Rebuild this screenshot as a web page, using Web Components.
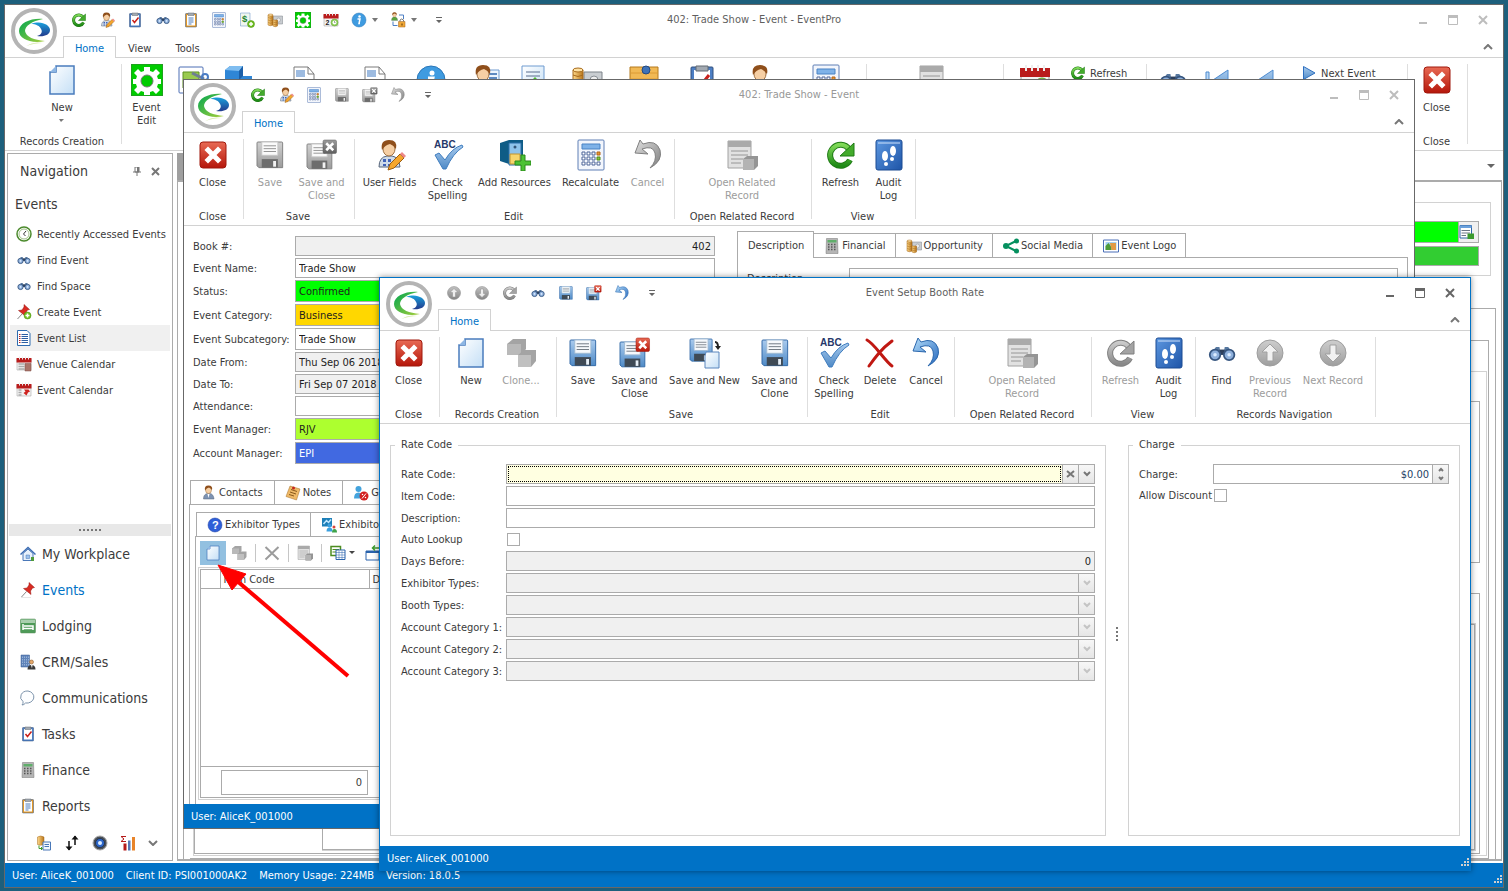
<!DOCTYPE html>
<html lang="en">
<head>
<meta charset="utf-8">
<title>402: Trade Show - Event - EventPro</title>
<style>
  html, body { height: 100%; margin: 0; }
  body {
    display: flex;
    padding: 4px 4px 3px;
    box-sizing: border-box;
    background: #1d5f7c;
    font: 11px/13px "DejaVu Sans Condensed", "Noto Sans", sans-serif;
    color: #3b3b3b;
    overflow: hidden;
  }
  .main { flex: 1; min-width: 0; }
  /* floating windows on the desktop */
  .event { position: absolute; inset: 79px 93px 62px 183px; }
  .rate { position: absolute; inset: 277px 37px 20px 379px; }
  .pointer { position: absolute; left: 210px; top: 556px; pointer-events: none; }

  .workspace { display: flex; flex: 1; min-height: 0; }
  .event-form { display: grid; grid-template-columns: 7fr 9fr; gap: 22px; height: 254px; padding: 0 6px 0 9px; }
  .event-fields { display: flex; flex-direction: column; gap: 2px; padding-top: 10px; --label-width: 102px; }
  .rate-form { display: flex; flex: 1; padding: 14px 10px 10px; }
  .rate-form group-box.wide { flex: 716; --label-width: 105px; }
  .rate-form group-box.side { flex: 332; --label-width: 74px; }
  .description { padding: 10px 9px; --label-width: 102px; display: block; }
  .detail { flex: 1; margin: 0 5px 0 5px; min-height: 0; }
  .inner { flex: 1; margin: 7px 4px 0 5px; min-height: 0; }
</style>
</head>
<body>

<app-window class="main" heading="402: Trade Show - Event - EventPro" tabs="Home,View,Tools"
            quick="refresh,user,task,find,clipboard,calc,money,coins,gear,calendar,info+,lock+">
  <ribbon-group slot="ribbon" label="Records Creation" width="116">
    <ribbon-button icon="page" label="New" menu></ribbon-button>
  </ribbon-group>
  <ribbon-group slot="ribbon" label="" width="744">
    <ribbon-button icon="gear" label="Event Edit"></ribbon-button>
    <ribbon-button icon="layout" hint="Layout"></ribbon-button>
    <ribbon-button icon="cube" hint="Space" width="44"></ribbon-button>
    <ribbon-button icon="report" hint="Report" width="86"></ribbon-button>
    <ribbon-button icon="report" hint="Summary" width="56"></ribbon-button>
    <ribbon-button icon="info" hint="Information" width="56"></ribbon-button>
    <ribbon-button icon="contactcard" hint="Contact" width="50"></ribbon-button>
    <ribbon-button icon="upload" hint="Export" width="48"></ribbon-button>
    <ribbon-button icon="coins" hint="Payments" width="60"></ribbon-button>
    <ribbon-button icon="board" hint="Board" width="54"></ribbon-button>
    <ribbon-button icon="task" hint="Tasks" width="62"></ribbon-button>
    <ribbon-button icon="contact" hint="Person" width="56"></ribbon-button>
    <ribbon-button icon="calc" hint="Calculate" width="74"></ribbon-button>
  </ribbon-group>
  <ribbon-group slot="ribbon" label="" width="136">
    <ribbon-button icon="related" hint="Related" disabled></ribbon-button>
  </ribbon-group>
  <ribbon-group slot="ribbon" label="" width="142" start>
    <ribbon-button icon="calendar" hint="Calendar" width="62"></ribbon-button>
    <ribbon-button icon="refresh" label="Refresh" small></ribbon-button>
  </ribbon-group>
  <ribbon-group slot="ribbon" label="" width="260" start>
    <ribbon-button icon="find" hint="Find" width="52"></ribbon-button>
    <ribbon-button icon="first" hint="First" width="38"></ribbon-button>
    <ribbon-button icon="prev" hint="Previous" width="60"></ribbon-button>
    <ribbon-button icon="next" label="Next Event" small></ribbon-button>
  </ribbon-group>
  <ribbon-group slot="ribbon" label="Close" width="59">
    <ribbon-button icon="close" label="Close"></ribbon-button>
  </ribbon-group>

  <div class="workspace">
    <nav-panel></nav-panel>
    <document-well></document-well>
  </div>

  <span slot="status">User: AliceK_001000</span>
  <span slot="status">Client ID: PSI001000AK2</span>
  <span slot="status">Memory Usage: 224MB</span>
  <span slot="status">Version: 18.0.5</span>
</app-window>

<app-window class="event" heading="402: Trade Show - Event" tabs="Home" inactive
            quick="refresh,user,calc,save-,saveclose-,undo-">
  <ribbon-group slot="ribbon" label="Close" width="59">
    <ribbon-button icon="close" label="Close"></ribbon-button>
  </ribbon-group>
  <ribbon-group slot="ribbon" label="Save" width="110">
    <ribbon-button icon="save" label="Save" disabled></ribbon-button>
    <ribbon-button icon="saveclose" label="Save and Close" width="56" disabled></ribbon-button>
  </ribbon-group>
  <ribbon-group slot="ribbon" label="Edit" width="319">
    <ribbon-button icon="user" label="User Fields" width="68"></ribbon-button>
    <ribbon-button icon="spelling" label="Check Spelling" width="48"></ribbon-button>
    <ribbon-button icon="resources" label="Add Resources" width="86"></ribbon-button>
    <ribbon-button icon="calc" label="Recalculate" width="66"></ribbon-button>
    <ribbon-button icon="undo" label="Cancel" width="48" disabled></ribbon-button>
  </ribbon-group>
  <ribbon-group slot="ribbon" label="Open Related Record" width="136">
    <ribbon-button icon="related" label="Open Related Record" width="84" disabled></ribbon-button>
  </ribbon-group>
  <ribbon-group slot="ribbon" label="View" width="103">
    <ribbon-button icon="refresh" label="Refresh" width="52"></ribbon-button>
    <ribbon-button icon="audit" label="Audit Log" width="44"></ribbon-button>
  </ribbon-group>

  <div class="event-form">
    <div class="event-fields">
      <form-field label="Book #:" value="402" tone="#f0f0f0" numeric></form-field>
      <form-field label="Event Name:" value="Trade Show"></form-field>
      <form-field label="Status:" kind="select" value="Confirmed" tone="#00ff00" tall></form-field>
      <form-field label="Event Category:" kind="select" value="Business" tone="#ffd700" tall></form-field>
      <form-field label="Event Subcategory:" kind="select" value="Trade Show" tall></form-field>
      <form-field label="Date From:" value="Thu Sep 06 2018" tone="#f0f0f0"></form-field>
      <form-field label="Date To:" value="Fri Sep 07 2018" tone="#f0f0f0"></form-field>
      <form-field label="Attendance:" value=""></form-field>
      <form-field label="Event Manager:" kind="select" value="RJV" tone="#adff2f" tall></form-field>
      <form-field label="Account Manager:" kind="select" value="EPI" tone="#4169e1" ink="#ffffff" tall></form-field>
    </div>
    <tab-pages items="Description|Financial:ledger|Opportunity:coins|Social Media:share|Event Logo:picture" active="0" style="padding-top:5px">
      <form-field class="description" label="Description:" value=""></form-field>
    </tab-pages>
  </div>
  <tab-pages class="detail" items="Contacts:contact|Notes:notes|Groups:people">
    <tab-pages class="inner" items="Exhibitor Types:question|Exhibitors:exhibitor">
      <item-grid></item-grid>
    </tab-pages>
  </tab-pages>

  <span slot="status">User: AliceK_001000</span>
</app-window>

<svg class="pointer" width="150" height="130" viewBox="0 0 150 130" aria-hidden="true">
  <path d="M138 120L26 24" stroke="#f00" stroke-width="4"/>
  <path d="M8 9L36 18L22 34Z" fill="#f00" stroke="#f00" stroke-width="1"/>
</svg>

<app-window class="rate" heading="Event Setup Booth Rate" tabs="Home" focused
            quick="up,down,refresh-,find,save,saveclose,undo">
  <ribbon-group slot="ribbon" label="Close" width="59">
    <ribbon-button icon="close" label="Close"></ribbon-button>
  </ribbon-group>
  <ribbon-group slot="ribbon" label="Records Creation" width="116">
    <ribbon-button icon="page" label="New" width="48"></ribbon-button>
    <ribbon-button icon="clone" label="Clone..." width="52" disabled></ribbon-button>
  </ribbon-group>
  <ribbon-group slot="ribbon" label="Save" width="250">
    <ribbon-button icon="save" label="Save"></ribbon-button>
    <ribbon-button icon="saveclose" label="Save and Close" width="56"></ribbon-button>
    <ribbon-button icon="savenew" label="Save and New" width="84"></ribbon-button>
    <ribbon-button icon="save" label="Save and Clone" width="56"></ribbon-button>
  </ribbon-group>
  <ribbon-group slot="ribbon" label="Edit" width="146">
    <ribbon-button icon="spelling" label="Check Spelling" width="46"></ribbon-button>
    <ribbon-button icon="delete" label="Delete" width="46"></ribbon-button>
    <ribbon-button icon="undo" label="Cancel" width="46"></ribbon-button>
  </ribbon-group>
  <ribbon-group slot="ribbon" label="Open Related Record" width="136">
    <ribbon-button icon="related" label="Open Related Record" width="84" disabled></ribbon-button>
  </ribbon-group>
  <ribbon-group slot="ribbon" label="View" width="103">
    <ribbon-button icon="refresh" label="Refresh" width="52" disabled></ribbon-button>
    <ribbon-button icon="audit" label="Audit Log" width="44"></ribbon-button>
  </ribbon-group>
  <ribbon-group slot="ribbon" label="Records Navigation" width="179">
    <ribbon-button icon="find" label="Find"></ribbon-button>
    <ribbon-button icon="up" label="Previous Record" width="50" disabled></ribbon-button>
    <ribbon-button icon="down" label="Next Record" width="76" disabled></ribbon-button>
  </ribbon-group>

  <div class="rate-form">
    <group-box class="wide" label="Rate Code">
      <form-field label="Rate Code:" kind="lookup" tone="#ffffe1"></form-field>
      <form-field label="Item Code:" value=""></form-field>
      <form-field label="Description:" value=""></form-field>
      <form-field label="Auto Lookup" kind="check"></form-field>
      <form-field label="Days Before:" value="0" tone="#f0f0f0" numeric></form-field>
      <form-field label="Exhibitor Types:" kind="select" tone="#f0f0f0" disabled></form-field>
      <form-field label="Booth Types:" kind="select" tone="#f0f0f0" disabled></form-field>
      <form-field label="Account Category 1:" kind="select" tone="#f0f0f0" disabled></form-field>
      <form-field label="Account Category 2:" kind="select" tone="#f0f0f0" disabled></form-field>
      <form-field label="Account Category 3:" kind="select" tone="#f0f0f0" disabled></form-field>
    </group-box>
    <split-handle></split-handle>
    <group-box class="side" label="Charge">
      <form-field label="Charge:" kind="spin" value="$0.00" ink="#1f3f66" numeric></form-field>
      <form-field label="Allow Discount" kind="check"></form-field>
    </group-box>
  </div>

  <span slot="status">User: AliceK_001000</span>
</app-window>

<script>
// ==============================
// Icon artwork, drawn on a 32 x 32 grid
// ==============================

const DEFS = `<defs>
  <linearGradient id="b" x2="0" y2="1"><stop stop-color="#a9cbee"/><stop offset="1" stop-color="#4f8ac6"/></linearGradient>
  <linearGradient id="u" x2="1" y2="1"><stop stop-color="#b5defa"/><stop offset="1" stop-color="#2467bd"/></linearGradient>
  <linearGradient id="d" x2="1" y2="1"><stop stop-color="#5c97e0"/><stop offset="1" stop-color="#1e55a8"/></linearGradient>
  <linearGradient id="r" x2="0" y2="1"><stop stop-color="#e86a54"/><stop offset="1" stop-color="#b5160a"/></linearGradient>
  <linearGradient id="g" x2="0" y2="1"><stop stop-color="#7fd957"/><stop offset="1" stop-color="#1f8a16"/></linearGradient>
  <linearGradient id="p" x2="1" y2="1"><stop stop-color="#ffffff"/><stop offset="1" stop-color="#c4dff6"/></linearGradient>
  <linearGradient id="y" x2="1"><stop stop-color="#ffd98a"/><stop offset="1" stop-color="#b8751a"/></linearGradient>
  <linearGradient id="k" x2="0" y2="1"><stop stop-color="#c2c2c2"/><stop offset="1" stop-color="#858585"/></linearGradient>
</defs>`;

const floppy = (x, y, s) => `<g transform="translate(${x} ${y}) scale(${s})">
  <path d="M1 0h25q1 0 1 1v26h-25l-2-2v-24q0-1 1-1z" fill="url(#b)" stroke="#2f66a5"/>
  <path d="M5 0h17v14h-17z" fill="#f6f9fc" stroke="#9db8d2"/><path d="M7 4h13M7 7h13M7 10h13" stroke="#6d7680"/>
  <path d="M5 18h17v9h-17z" fill="#3f4a55"/><path d="M17 20h3v6h-3z" fill="#e8f0f8"/></g>`;
const redBadge = (x, y, s) => `<g transform="translate(${x} ${y}) scale(${s})">
  <rect width="26" height="26" rx="3" fill="url(#r)" stroke="#a0180c"/>
  <path d="M8 8l10 10M18 8l-10 10" stroke="#fff" stroke-width="5" stroke-linecap="square"/></g>`;
const head = (shirt) => `<path d="M5 28q0-10 8-11h5q7 1 8 11z" fill="${shirt}" stroke="#56657a"/>
  <ellipse cx="15" cy="10" rx="6" ry="7" fill="#f6cfa4" stroke="#a0703f"/>
  <path d="M8 11q-2-10 7-10t7 9q-3-4-6-5q-5 1-8 6z" fill="#8f4f1b"/>`;
const sheet = `<path d="M5 2h22v28h-22z" fill="url(#p)" stroke="#6f9bd0"/>`;
const coinStack = `<path d="M2 6v20q4 3 10 0v-20z" fill="url(#y)" stroke="#a76a1c"/><ellipse cx="7" cy="6" rx="5" ry="2" fill="#ffe3a5" stroke="#a76a1c"/>
  <path d="M2 11q5 3 10 0M2 16q5 3 10 0M2 21q5 3 10 0" fill="none" stroke="#a76a1c"/>`;
const calBase = `<path d="M2 6h28v22h-28z" fill="#f3f3f3" stroke="#999"/><path d="M1 4h30v9h-30z" fill="#b91c1c"/>
  <path d="M7 1v6M13 1v6M19 1v6M25 1v6" stroke="#eee" stroke-width="2"/>`;
const board = (c) => `<rect x="5" y="3" width="22" height="27" rx="1" fill="${c}" stroke="#33507c"/><path d="M8 6h16v21h-16z" fill="#fff"/>
  <path d="M10 2h12v5h-12z" fill="#a2a9b1" stroke="#626a73"/>`;
const plus = (x, y) => `<circle cx="${x}" cy="${y}" r="7" fill="#6fbf1f" stroke="#468a0c"/><path d="M${x - 4} ${y}h8M${x} ${y - 4}v8" stroke="#fff" stroke-width="3"/>`;
const disc = (arrow) => `<circle cx="16" cy="16" r="13" fill="url(#k)" stroke="#858585"/>
  <path d="${arrow}" fill="#eee" stroke="#888"/>`;

const ICONS = {
  refresh: `<path d="M25 21a10.500 10.500 0 1 1 -1-11" fill="none" stroke="#1e7a14" stroke-width="6"/>
    <path d="M25 21a10.500 10.500 0 1 1 -1-11" fill="none" stroke="url(#g)" stroke-width="4"/>
    <path d="M29 4v13h-14z" fill="#43ab2b" stroke="#1e7a14"/>`,
  user: head('#cfdbe8') + `<path d="M9 20h3v3h-3zM14 20h3v3h-3zM9 25h3v2h-3zM14 25h3v2h-3z" fill="#4163b8"/>
    <path d="M14 31l2-6l10-10l4 4l-10 10z" fill="#f5a62c" stroke="#9c5d10"/><path d="M26 15l2-2l4 4l-2 2z" fill="#e88"/>`,
  contact: head('#7d93b2') + `<path d="M13 18l2 8l2-8z" fill="#fff"/>`,
  contactcard: `<path d="M14 6h17v18h-17z" fill="#eef5fd" stroke="#6f9bd0"/><path d="M21 10h8M21 14h8" stroke="#5f8ac0" stroke-width="2"/>` + head('#59a63b'),
  task: board('#4d7fc4') + `<path d="M11 16l4 5l8-10" fill="none" stroke="#c8211b" stroke-width="3"/>`,
  find: `<g transform="translate(2 2) scale(.88)"><path d="M9 9h4l1 6h4l1-6h4l6 9h-26z" fill="#56779f"/><path d="M13 12h6v6h-6z" fill="#2c3f5c"/>
    <circle cx="8" cy="18" r="6" fill="#8eb0dc" stroke="#36557f" stroke-width="2"/><circle cx="24" cy="18" r="6" fill="#8eb0dc" stroke="#36557f" stroke-width="2"/>
    <circle cx="8" cy="18" r="2" fill="#dcecff"/><circle cx="24" cy="18" r="2" fill="#dcecff"/></g>`,
  clipboard: board('#e2992a') + `<path d="M11 12h10M11 16h10M11 20h10M11 24h6" stroke="#4f7fbd" stroke-width="2"/>`,
  calc: `<rect x="3" y="1" width="26" height="30" rx="1" fill="#f3f6fc" stroke="#5f7fb5"/><path d="M7 5h18v5h-18z" fill="#7fb2e8" stroke="#4a83c4"/>
    ${[13, 18, 23].map(y => [7, 12, 17].map(x => `<path d="M${x} ${y}h3v3h-3z" fill="#fff" stroke="#4d6498"/>`).join('')).join('')}
    <path d="M22 13h3v3h-3z" fill="#e79a35" stroke="#b5651a"/><path d="M22 18h3v3h-3z" fill="#8cc63f" stroke="#4c8a17"/><path d="M22 23h3v3h-3z" fill="#fff" stroke="#4d6498"/>`,
  money: `<path d="M3 2h19v26h-19z" fill="#eff6ee" stroke="#5f8ac0"/><text x="6" y="20" font-size="19" font-weight="bold" fill="#23832c" font-family="Liberation Sans">$</text>` + plus(24, 24),
  coins: `<path d="M13 8h18v16h-18z" fill="#c9cdd1" stroke="#7d8389"/><circle cx="23" cy="16" r="4" fill="#eee" stroke="#8a9096"/>` + coinStack +
    `<g transform="translate(8 8)"><path d="M4 8v12q4 3 9 0v-12z" fill="url(#y)" stroke="#a76a1c"/><path d="M4 12q4 3 9 0M4 16q4 3 9 0" fill="none" stroke="#a76a1c"/></g>`,
  gear: `<path d="M0 0h32v32h-32z" fill="#0c0" stroke="#3b7d3b"/>
    <path d="M13 3h6v4l3 1l3-3l4 4l-3 3l1 3h3v5h-3l-1 3l3 3l-4 4l-3-3l-3 1v3h-6v-3l-3-1l-3 3l-4-4l3-3l-1-3h-3v-5h3l1-3l-3-3l4-4l3 3l3-1z" fill="#fff"/>
    <circle cx="16" cy="17" r="6" fill="#0c0" stroke="#777"/>`,
  calendar: calBase + `<text x="5" y="26" font-size="14" font-weight="bold" fill="#222" font-family="Liberation Sans">2</text>
    <circle cx="23" cy="21" r="7" fill="#8fcf5a" stroke="#5c9c2a"/><circle cx="23" cy="21" r="4" fill="#fff"/><path d="M23 18v3h2" fill="none" stroke="#444"/>`,
  info: `<circle cx="16" cy="16" r="14" fill="#3f9be0" stroke="#2a76b8"/><circle cx="17" cy="9" r="2.500" fill="#fff"/><path d="M13 14h5l-2 9h2" fill="none" stroke="#fff" stroke-width="3"/>`,
  lock: `<g transform="scale(.6)">${head('#59a63b')}</g><path d="M18 6h9v8M6 19v8h9" fill="none" stroke="#4d7fc4" stroke-width="2"/>
    <path d="M17 19h13v11h-13z" fill="#f0a838" stroke="#a5631a"/><path d="M20 19v-3q3-4 7 0v3" fill="none" stroke="#777" stroke-width="2"/><path d="M23 23h2v4h-2z" fill="#5a3708"/>`,
  save: floppy(3, 3, 0.95),
  saveclose: floppy(1, 5, 0.92) + redBadge(17, 1, 0.52),
  savenew: floppy(1, 2, 0.82) + `<path d="M17 15h13v16h-14v-12z" fill="url(#p)" stroke="#5b86bd"/><path d="M26 5q3 0 3 5" fill="none" stroke="#222" stroke-width="2"/><path d="M26 9h6l-3 4z" fill="#222"/>`,
  undo: `<path d="M10 10q11-4 13 4q2 8-5 15q13-7 10-18q-4-11-17-6l-3-4l-5 13l13 1z" fill="url(#u)" stroke="#2b67ad"/>`,
  close: redBadge(3, 3, 1),
  page: `<path d="M10 2h18v28h-24v-22h6z" fill="url(#p)" stroke="#4a7cbd" stroke-width="1.500"/><path d="M4 8l6-6v6z" fill="#8db6e4"/>`,
  clone: `<path d="M2 7l6-5h13v10l-5 6h-14z" fill="#8d8d8d"/><path d="M2 7h14v11h-14z" fill="#a8a8a8"/><path d="M13 18l6-5h12v11l-5 6h-13z" fill="#8d8d8d"/><path d="M13 18h13v12h-13z" fill="#b0b0b0"/>`,
  spelling: `<text x="2" y="9" font-size="10" font-weight="bold" fill="#26386a" font-family="Liberation Sans">ABC</text>
    <path d="M3 16l4-2l6 7q7-12 17-15l1 2q-10 6-17 22h-3z" fill="url(#b)" stroke="#3f7dbf"/>`,
  delete: `<path d="M3 3q4 2 13 13t12 13M28 4q-8 6-13 12t-10 13" fill="none" stroke="#c01812" stroke-width="3" stroke-linecap="round"/>`,
  related: `<path d="M2 2h23v27h-23z" fill="#d9d9d9" stroke="#8a8a8a"/><path d="M2 2h23v6h-23z" fill="#959595"/>
    <path d="M5 12h17M5 16h17M5 20h12M5 24h10" stroke="#7c7c7c"/><path d="M17 20l4-3h11v10l-4 4h-11z" fill="#7b7b7b"/><path d="M17 20h11v11h-11z" fill="#a0a0a0"/>`,
  audit: `<rect x="3" y="1" width="26" height="30" rx="2" fill="url(#d)" stroke="#1a4a92"/><path d="M5 4h22" stroke="#cfe2fb"/>
    <ellipse cx="12" cy="17" rx="3" ry="5" fill="#fff"/><circle cx="13" cy="25" r="2" fill="#fff"/><ellipse cx="20" cy="12" rx="3" ry="5" fill="#fff"/><circle cx="19" cy="20" r="2" fill="#fff"/>`,
  up: disc('M16 7l8 8h-5v9h-6v-9h-5z'),
  down: disc('M16 25l8-8h-5v-9h-6v9h-5z'),
  resources: `<path d="M1 4l9-3h14v24h-14l-9-3z" fill="#0f5c86"/><path d="M10 4h12v22h-12z" fill="#8fc3ea" stroke="#2d6ea8"/><circle cx="16" cy="8" r="1.500" fill="#357"/>
    <path d="M11 15h10v10h-10z" fill="#f7d56c" stroke="#bf9330"/><path d="M22 16h4v6h6v4h-6v6h-4v-6h-6v-4h6z" fill="#4cc234" stroke="#2a8a1a"/>`,
  layout: `<rect x="1" y="3" width="24" height="26" rx="1" fill="#fff" stroke="#4d6fb5"/><path d="M5 8h16v16h-16z" fill="#9aca4f" stroke="#5c9121"/><path d="M14 9l12 6" stroke="#6f7f93" stroke-width="3"/><circle cx="27" cy="13" r="3" fill="none" stroke="#4a7cc4" stroke-width="2"/>`,
  cube: `<path d="M2 6l5-4h13v10h9v18h-27z" fill="#2f86d6"/><path d="M2 6l5-4h13l-4 5z" fill="#7fbdf0"/><path d="M16 7l4-5v10l-4 4z" fill="#1c5fa8"/>`,
  report: `<path d="M6 3h14l6 7v20h-20z" fill="#fff" stroke="#7a7a7a"/><path d="M20 3v7h6" fill="none" stroke="#7a7a7a"/><path d="M8 6h9v7h-9zM8 15h16v12h-16z" fill="#9dbbe0"/>`,
  upload: sheet + `<path d="M9 8h14M9 12h14" stroke="#5a6c8c"/><path d="M18 13l7 7h-4v8h-6v-8h-4z" fill="#4cb82e"/>`,
  board: `<path d="M2 3h28v25h-28z" fill="#f1b955" stroke="#b57a1e"/><path d="M3 9h26M3 15h26M3 21h26" stroke="#dc9a35"/><circle cx="18" cy="6" r="4" fill="#3f73b8" stroke="#234a82"/>`,
  first: `<path d="M4 8h3v20h-3z" fill="#bcd9f5" stroke="#4d8bd0"/><path d="M8 18l18-12v24z" fill="url(#b)" stroke="#4d8bd0"/>`,
  prev: `<path d="M4 18l18-12v24z" fill="url(#b)" stroke="#4d8bd0"/>`,
  next: `<path d="M5 3l23 13l-23 13z" fill="url(#b)" stroke="#2d6fc0" stroke-width="2"/>`,
  ledger: `<path d="M5 1h22l1 30h-24z" fill="#b5b5b5" stroke="#777"/><path d="M7 4h18v5h-18z" fill="#5fae6a"/><path d="M8 13h3M14 13h3M20 13h3M8 18h3M14 18h3M20 18h3M8 23h3M14 23h3M20 23h3" stroke="#555" stroke-width="3"/>`,
  share: `<path d="M26 6l-20 10l20 10" fill="none" stroke="#06905f" stroke-width="4"/><circle cx="27" cy="6" r="5" fill="#06905f"/><circle cx="6" cy="16" r="6" fill="#06905f"/><circle cx="27" cy="26" r="5" fill="#06905f"/>`,
  picture: `<path d="M1 4h30v24h-30z" fill="#fff" stroke="#4a6fb8" stroke-width="2"/><path d="M5 8h22v16h-22z" fill="#a5d1f2"/><path d="M5 16l6-6l6 8v6h-12z" fill="#4f9b3a"/><path d="M14 10h12v14h-9z" fill="#e29a45"/>`,
  notes: `<path d="M10 2l20 6l-7 22l-21-7z" fill="#efb967" stroke="#a56e25"/><path d="M12 9l12 4M10 14l12 4M8 19l10 3" stroke="#8a5a1c" stroke-width="2"/><circle cx="17" cy="6" r="3" fill="#c3271d"/>`,
  people: `<circle cx="11" cy="8" r="6" fill="#43a3dd"/><path d="M2 27q0-12 9-12t9 12z" fill="#43a3dd"/><circle cx="21" cy="18" r="4" fill="#eb9b49"/><circle cx="22" cy="22" r="9" fill="#d32020"/><path d="M18 27l8-10" stroke="#fff" stroke-width="2"/><circle cx="19" cy="19" r="1.500" fill="#fff"/><circle cx="25" cy="25" r="1.500" fill="#fff"/>`,
  question: `<circle cx="16" cy="16" r="14" fill="#2f5fd8" stroke="#1d3fa0"/><text x="10" y="24" font-size="22" font-weight="bold" fill="#fff" font-family="Liberation Sans">?</text>`,
  exhibitor: `<path d="M2 2h20v17h-20z" fill="#1d7fb8"/><path d="M5 14l6-7l4 4l5-6" fill="none" stroke="#bfe6ff" stroke-width="3"/><circle cx="17" cy="17" r="4" fill="#3aa0e0"/><path d="M11 29q0-8 6-8t6 8z" fill="#3aa0e0"/><circle cx="26" cy="20" r="3" fill="#d8443a"/><path d="M22 31q0-7 5-7t5 7z" fill="#3fa34a"/>`,
  grids: `<path d="M2 3h19v18h-19z" fill="#fff" stroke="#4c8d20" stroke-width="3"/><path d="M5 9h13M5 14h13" stroke="#4c8d20" stroke-width="2"/><path d="M12 10h18v19h-18z" fill="#fff" stroke="#2a63ac" stroke-width="2"/><path d="M12 15h18M12 20h18M12 25h18M18 12v17M24 12v17" stroke="#2a63ac"/>`,
  popout: `<path d="M2 12h26v18h-26z" fill="#fff" stroke="#2a63ac" stroke-width="2"/><path d="M2 12h26v4h-26z" fill="#2a63ac"/><path d="M16 6h12M20 1l-5 5l5 5" fill="none" stroke="#3f9b2b" stroke-width="3"/>`,
  cross: `<path d="M3 4l26 25M29 4l-26 25" stroke="#9c9c9c" stroke-width="4"/>`,
  clock: `<circle cx="16" cy="16" r="14" fill="#fff" stroke="#4b8a2c" stroke-width="3"/><circle cx="16" cy="16" r="10" fill="#fff" stroke="#9fbf88" stroke-width="2"/><path d="M20 10l-5 6l4 4" fill="none" stroke="#333" stroke-width="2"/>`,
  pin: `<path d="M3 30l10-11" stroke="#888" stroke-width="2"/><path d="M18 1l11 10l-4 1l-4 6l1 7l-15-12l7-1l4-6z" fill="#d92b22" stroke="#951510"/><path d="M2 31h20" stroke="#ccc"/>`,
  pinadd: `<path d="M3 30l10-11" stroke="#888" stroke-width="2"/><path d="M16 1l11 10l-4 1l-4 6l1 7l-15-12l7-1l4-6z" fill="#d92b22" stroke="#951510"/>` + plus(23, 23),
  list: `<path d="M3 1h19l6 6v24h-25z" fill="#fff" stroke="#2f6cb0" stroke-width="2"/><path d="M11 9h13M11 13h13M11 17h13M11 21h13M11 25h13" stroke="#2b5fa3" stroke-width="2"/><path d="M6 9h3M6 13h3M6 17h3M6 21h3M6 25h3" stroke="#b02020" stroke-width="2"/>`,
  venue: calBase + `<path d="M5 16h12M5 21h12M5 26h12" stroke="#aaa" stroke-width="3"/><path d="M18 15h12v15h-12z" fill="#a9746a" stroke="#7f4d45"/>`,
  eventcal: calBase + `<path d="M5 16h6M5 21h6M5 26h6" stroke="#aaa" stroke-width="3"/><path d="M16 15h9l3 4l-4 2l-3 6l-6-5l4-3z" fill="#cf2420"/>`,
  house: `<path d="M6 15v14h20v-14l-10-9z" fill="#e8f1fb" stroke="#4a78b8" stroke-width="2"/><path d="M1 17l15-14l15 14" fill="none" stroke="#3d6db3" stroke-width="3"/><path d="M12 18h7v7h-7z" fill="#9cc1ec" stroke="#4a78b8"/><path d="M22 22h6v8h-6z" fill="#4f9b3a"/>`,
  bed: `<rect x="1" y="2" width="30" height="28" rx="2" fill="#4e9a58" stroke="#5b8f5b"/><path d="M2 3h28v7h-28z" fill="#a9cfae"/><path d="M6 12v12M6 21h20M26 24v-8h-18" fill="none" stroke="#fff" stroke-width="3"/>`,
  crm: `<path d="M2 2h17v24h-17z" fill="#5f83b9" stroke="#3b5f95"/><path d="M5 5v18M9 5v18M13 5v18M17 5v18" stroke="#cfe0f5" stroke-dasharray="3 2"/><circle cx="23" cy="16" r="4" fill="#e5a86b" stroke="#7c4c1d"/><path d="M15 31q0-9 8-9t8 9z" fill="#3a3a3a"/><path d="M22 22h3l-1 7z" fill="#fff"/>`,
  bubble: `<path d="M16 2a14 12 0 1 1 -5 24q-3 4-7 4q3-3 2-7a14 12 0 0 1 10-21z" fill="#fdfeff" stroke="#7c93ab" stroke-width="2"/>`,
  transfer: `<path d="M3 4q6-4 13 0v15q-7 3-13 0z" fill="url(#y)" stroke="#a76a1c"/><path d="M14 14h15v16h-15z" fill="#f3f8ff" stroke="#4a78b8" stroke-width="2"/><path d="M17 19h9M17 23h9" stroke="#4a78b8" stroke-width="2"/><path d="M6 21v6h6M10 24l3 3l-3 3" fill="none" stroke="#3f9b2b" stroke-width="2"/>`,
  updown: `<path d="M10 12v18M22 20v-18" stroke="#111" stroke-width="3"/><path d="M3 23h14l-7 8zM15 9h14l-7-8z" fill="#111"/>`,
  target: `<circle cx="16" cy="16" r="14" fill="#4a4f57" stroke="#aaa" stroke-width="2"/><circle cx="16" cy="16" r="9" fill="#2d66c8" stroke="#111"/><circle cx="16" cy="16" r="4" fill="#dcecff"/>`,
  chart: `<path d="M2 3h10M2 3l6 5l-6 5h10" fill="none" stroke="#b51a1a" stroke-width="2"/><path d="M7 17h6v14h-6z" fill="#b51a1a"/><path d="M16 11h5v20h-5z" fill="#5577b5"/><path d="M24 4h6v27h-6z" fill="#e8842a"/>`,
  pick: `<path d="M2 3h23v25h-23z" fill="#fff" stroke="#2f66a5" stroke-width="2"/><path d="M2 3h23v5h-23z" fill="#6aa0dc"/><path d="M5 13h17M5 18h17M5 23h9" stroke="#6b7685" stroke-width="2"/><path d="M17 19h13v11h-13z" fill="#3b9a2e"/>`,
};

class UiIcon extends HTMLElement {
  constructor() {
    super();
    this.attachShadow({ mode: 'open' });
  }
  connectedCallback() {
    const size = this.getAttribute('size') || 16;
    this.shadowRoot.innerHTML = `
      <style>
        :host { display: inline-block; flex: none; line-height: 0; }
        :host([off]) { filter: grayscale(1) opacity(.8); }
      </style>
      <svg width="${size}" height="${size}" viewBox="0 0 32 32" aria-hidden="true">${DEFS}${ICONS[this.getAttribute('name')] || ''}</svg>`;
  }
}
customElements.define('ui-icon', UiIcon);

// ==============================
// <app-window> - frame, title bar, ribbon, status bar
// ==============================

const LOGO = `<svg class="logo" width="46" height="46" viewBox="0 0 46 46" aria-hidden="true">
  <defs>
    <linearGradient id="lg" x2="1" y2="1"><stop stop-color="#00a651"/><stop offset="1" stop-color="#a6ce39"/></linearGradient>
    <linearGradient id="lb" x2="0" y2="1"><stop stop-color="#1aa0dc"/><stop offset="1" stop-color="#223a8c"/></linearGradient>
  </defs>
  <circle cx="23" cy="23" r="21" fill="#fff" stroke="#b4b4b4" stroke-width="4"/>
  <path d="M32 11C20 10 8 15 8 23C8 31 20 36 34 33C23 32 15 29 14 23C14 18 21 13 32 11Z" fill="url(#lg)"/>
  <path d="M20 16C30 12 39 17 39 22C39 27 33 29 26 28C30 27 32 24 30 21C29 18 25 16 20 16Z" fill="url(#lb)"/>
  <path d="M15 38Q23 33 31 35Q24 35 15 38Z" fill="#d5e8a8"/>
</svg>`;

class AppWindow extends HTMLElement {
  constructor() {
    super();
    this.attachShadow({ mode: 'open' });
  }

  connectedCallback() {
    const tabs = this.getAttribute('tabs').split(',');
    this.shadowRoot.innerHTML = `
      <style>
        :host {
          display: flex; flex-direction: column; box-sizing: border-box;
          border: 1px solid #686868; background: #fff;
          --title: #5f5f5f; --control: #bdbdbd;
        }
        :host([inactive]) { --title: #989898; }
        :host([focused]) { border-color: #0072c6; --control: #666; box-shadow: 0 0 6px rgba(0, 0, 0, .45); }
        header { display: grid; grid-template: 31px 22px / 58px auto 1fr auto; flex: none; }
        .logo { grid-area: 1 / 1 / 3 / 2; margin: 3px 0 0 6px; z-index: 1; }
        .title { grid-area: 1 / 1 / 2 / -1; text-align: center; line-height: 30px; color: var(--title); }
        .quick { grid-area: 1 / 2; display: flex; align-items: center; gap: 12px; padding: 0 0 1px 8px; z-index: 1; }
        .controls { grid-area: 1 / 4; display: flex; align-items: center; gap: 6px; padding: 0 8px 1px 0; z-index: 1; }
        button { display: flex; align-items: center; gap: 5px; padding: 0; border: 0; background: none; color: inherit; font: inherit; }
        .controls button { width: 24px; height: 24px; justify-content: center; }
        .more { margin-left: 6px; }
        .tabs { grid-area: 2 / 1 / 3 / -1; display: flex; padding-left: 58px; box-shadow: inset 0 -1px #d2d2d2; }
        .tabs button { padding: 2px 12px 0; }
        .tabs button.on { min-width: 53px; justify-content: center; padding: 1px 2px 0; color: #0072c6; background: #fff; border: solid #d2d2d2; border-width: 1px 1px 0; }
        .fold { margin-left: auto; }
        .tabs .fold { padding: 0 10px 0 0; }
        .ribbon { display: flex; flex: none; height: 86px; padding-top: 6px; border-bottom: 1px solid #d2d2d2; overflow: hidden; }
        .body { display: flex; flex: 1; flex-direction: column; min-height: 0; }
        footer { display: flex; align-items: center; flex: none; gap: 12px; height: 24px; padding: 0 1px 0 7px; background: #0072c6; color: #fff; }
        .grip { margin: 8px 0 0 auto; }
      </style>
      <header>
        ${LOGO}
        <div class="title">${this.getAttribute('heading')}</div>
        <div class="quick">${this._quick()}
          <button class="more" aria-label="Customize"><svg width="8" height="8"><path d="M1 1h6v1h-6zM1 4h6l-3 3z" fill="#666"/></svg></button>
        </div>
        <div class="controls">
          <button aria-label="Minimize"><svg width="10" height="10"><path d="M1 7h8v2h-8z" fill="var(--control)"/></svg></button>
          <button aria-label="Maximize"><svg width="10" height="10"><path d="M0 0h10v3h-10z" fill="var(--control)"/><path d="M.5.5h9v9h-9z" fill="none" stroke="var(--control)"/></svg></button>
          <button aria-label="Close"><svg width="10" height="10"><path d="M1 1l8 8M9 1l-8 8" stroke="var(--control)" stroke-width="2"/></svg></button>
        </div>
        <div class="tabs">
          ${tabs.map((t, i) => `<button class="${i ? '' : 'on'}">${t}</button>`).join('')}
          <button class="fold" aria-label="Collapse ribbon"><svg width="10" height="6"><path d="M1 5l4-4l4 4" fill="none" stroke="#777" stroke-width="2"/></svg></button>
        </div>
      </header>
      <div class="ribbon"><slot name="ribbon"></slot></div>
      <div class="body"><slot></slot></div>
      <footer><slot name="status"></slot>
        <svg class="grip" width="9" height="9"><path d="M7 0h2v2h-2zM4 3h2v2h-2zM7 3h2v2h-2zM1 6h2v2h-2zM4 6h2v2h-2zM7 6h2v2h-2z" fill="#cfcfcf"/></svg>
      </footer>`;
  }

  // a trailing "+" adds a menu arrow, a trailing "-" greys the icon out
  _quick() {
    return this.getAttribute('quick').split(',').map((item) => {
      const name = item.replace(/[+-]$/, '');
      const off = item.endsWith('-');
      const arrow = item.endsWith('+') ? '<svg width="6" height="4"><path d="M0 0h6l-3 4z" fill="#777"/></svg>' : '';
      return `<button aria-label="${name}" ${off ? 'disabled' : ''}><ui-icon name="${name}" ${off ? 'off' : ''}></ui-icon>${arrow}</button>`;
    }).join('');
  }
}
customElements.define('app-window', AppWindow);

class RibbonGroup extends HTMLElement {
  constructor() {
    super();
    this.attachShadow({ mode: 'open' });
  }
  connectedCallback() {
    this.shadowRoot.innerHTML = `
      <style>
        :host {
          display: flex; flex: none; flex-direction: column; justify-content: space-between;
          width: ${this.getAttribute('width')}px; height: 86px; padding-right: 1px;
          background: linear-gradient(#dedede, #dedede) right top / 1px 80px no-repeat;
        }
        .row { display: flex; justify-content: center; padding-right: 2px; }
        :host([start]) .row { justify-content: flex-start; }
        .label { height: 15px; text-align: center; padding-right: 2px; white-space: nowrap; }
      </style>
      <div class="row"><slot></slot></div>
      <div class="label">${this.getAttribute('label')}</div>`;
  }
}
customElements.define('ribbon-group', RibbonGroup);

class RibbonButton extends HTMLElement {
  constructor() {
    super();
    this.attachShadow({ mode: 'open' });
  }
  connectedCallback() {
    const off = this.hasAttribute('disabled');
    const small = this.hasAttribute('small');
    const label = this.getAttribute('label') || '';
    const width = this.getAttribute('width') || 47;
    this.shadowRoot.innerHTML = `
      <style>
        :host { display: block; flex: none; }
        button {
          display: flex; flex-direction: column; align-items: center; gap: 5px;
          width: ${width}px; padding: 0; border: 0; background: none;
          color: #3b3b3b; font: inherit; text-align: center;
        }
        button:disabled { color: #9c9c9c; }
        :host([small]) button { flex-direction: row; gap: 4px; width: auto; padding: 1px 4px; white-space: nowrap; }
        .menu { display: block; }
      </style>
      <button ${off ? 'disabled' : ''} ${label ? '' : `aria-label="${this.getAttribute('hint')}"`}>
        <ui-icon name="${this.getAttribute('icon')}" size="${small ? 16 : 32}" ${off ? 'off' : ''}></ui-icon>
        <span>${label}</span>
        ${this.hasAttribute('menu') ? '<svg class="menu" width="6" height="4"><path d="M0 0h5l-3 3z" fill="#777"/></svg>' : ''}
      </button>`;
  }
}
customElements.define('ribbon-button', RibbonButton);

// ==============================
// <form-field> - label plus text box, drop-down, lookup, spinner or tick box
// ==============================

const chevron = (color) => `<svg width="8" height="6"><path d="M1 1l3 3l3-3" fill="none" stroke="${color}" stroke-width="2"/></svg>`;

class FormField extends HTMLElement {
  constructor() {
    super();
    this.attachShadow({ mode: 'open' });
  }

  connectedCallback() {
    const tall = this.hasAttribute('tall');
    this.shadowRoot.innerHTML = `
      <style>
        :host { display: block; }
        .row { display: flex; align-items: center; min-height: ${tall ? 22 : 20}px; }
        .row.check { min-height: 19px; }
        label { flex: none; width: var(--label-width); white-space: nowrap; }
        .box {
          display: flex; flex: 1; min-width: 0; height: ${tall ? 22 : 20}px; box-sizing: border-box;
          border: 1px solid #ababab; background: ${this.getAttribute('tone') || '#fff'};
        }
        input, select {
          flex: 1; min-width: 0; margin: 0; padding: 0 3px; border: 0; outline: 0; border-radius: 0;
          background: none; appearance: none; font: inherit; opacity: 1;
          color: ${this.getAttribute('ink') || '#1e1e1e'}; text-align: ${this.hasAttribute('numeric') ? 'right' : 'left'};
        }
        .tick { flex: none; width: 13px; height: 13px; margin-left: 1px; border: 1px solid #ababab; background: #fff; }
        .focus { margin: 1px; border: 1px dotted #000; }
        .end { display: flex; align-items: center; justify-content: center; width: 15px; padding: 0; border: 0; border-left: 1px solid #ababab; background: linear-gradient(#f7f7f7, #e6e6e6); box-sizing: content-box; }
        .end.steps { flex-direction: column; gap: 4px; }
      </style>
      <div class="row ${this.getAttribute('kind') || ''}">
        <label for="f">${this.getAttribute('label')}</label>${this._control()}
      </div>`;
  }

  _control() {
    const value = this.getAttribute('value') || '';
    const off = this.hasAttribute('disabled');
    const up = '<svg width="6" height="5"><path d="M1 4l2-2l2 2" fill="none" stroke="#777" stroke-width="2"/></svg>';
    const down = '<svg width="6" height="5"><path d="M1 1l2 2l2-2" fill="none" stroke="#777" stroke-width="2"/></svg>';
    switch (this.getAttribute('kind')) {
      case 'check':
        return '<input id="f" class="tick" type="checkbox">';
      case 'select':
        return `<div class="box"><select id="f" ${off ? 'disabled' : ''}><option>${value}</option></select>
          <span class="end">${chevron(off ? '#c4c4c4' : '#777')}</span></div>`;
      case 'lookup':
        return `<div class="box"><select id="f" class="focus"><option></option></select>
          <button class="end" aria-label="Clear"><svg width="9" height="8"><path d="M1 1l7 6M8 1l-7 6" stroke="#777" stroke-width="2"/></svg></button>
          <span class="end">${chevron('#777')}</span></div>`;
      case 'spin':
        return `<div class="box"><input id="f" value="${value}"><span class="end steps">${up}${down}</span></div>`;
      default:
        return `<div class="box"><input id="f" value="${value}"></div>`;
    }
  }
}
customElements.define('form-field', FormField);

class GroupBox extends HTMLElement {
  constructor() {
    super();
    this.attachShadow({ mode: 'open' });
    this.shadowRoot.innerHTML = `
      <style>
        :host { display: flex; min-width: 0; }
        fieldset { flex: 1; min-width: 0; margin: 0; padding: 12px 10px; border: 1px solid #d2d2d2; }
        legend { margin-left: -6px; padding: 0 6px; line-height: 14px; }
        .rows { display: flex; flex-direction: column; gap: 2px; }
      </style>
      <fieldset><legend></legend><div class="rows"><slot></slot></div></fieldset>`;
  }
  connectedCallback() {
    this.shadowRoot.querySelector('legend').textContent = this.getAttribute('label');
  }
}
customElements.define('group-box', GroupBox);

class SplitHandle extends HTMLElement {
  constructor() {
    super();
    this.attachShadow({ mode: 'open' });
    this.shadowRoot.innerHTML = `
      <style>:host { display: flex; flex: none; align-items: center; justify-content: center; width: 22px; padding-bottom: 6px; }</style>
      <svg width="2" height="14"><path d="M0 0h2v2h-2zM0 4h2v2h-2zM0 8h2v2h-2zM0 12h2v2h-2z" fill="#777"/></svg>`;
  }
}
customElements.define('split-handle', SplitHandle);

// ==============================
// <tab-pages> - tab row over a bordered page
// ==============================

class TabPages extends HTMLElement {
  constructor() {
    super();
    this.attachShadow({ mode: 'open' });
  }
  connectedCallback() {
    const active = this.getAttribute('active');
    const tabs = this.getAttribute('items').split('|').map((item, i) => {
      const [text, icon] = item.split(':');
      return `<button class="${String(i) === active ? 'on' : ''}">${icon ? `<ui-icon name="${icon}"></ui-icon>` : ''}${text}</button>`;
    });
    this.shadowRoot.innerHTML = `
      <style>
        :host { display: flex; flex-direction: column; min-width: 0; box-sizing: border-box; }
        .tabs { display: flex; align-items: flex-end; height: 26px; flex: none; padding-left: 1px; }
        :host([active]) .tabs { padding-left: 0; }
        :host(.detail) .tabs, :host(.inner) .tabs { height: 24px; }
        button {
          display: flex; align-items: center; gap: 2px; height: 24px; margin-right: -1px; padding: 0 9px 0 10px;
          border: 1px solid #ababab; border-bottom: 0; background: #fff; color: inherit; font: inherit; white-space: nowrap;
        }
        :host(.detail) button { padding: 0 11px 0 10px; }
        :host(.inner) button { padding: 0 10px; }
        .on { height: 27px; margin-bottom: -1px; z-index: 1; }
        .page { display: flex; flex: 1; flex-direction: column; min-height: 0; border: solid #ababab; border-width: 1px 1px 0; }
      </style>
      <div class="tabs">${tabs.join('')}</div>
      <div class="page"><slot></slot></div>`;
  }
}
customElements.define('tab-pages', TabPages);

class ItemGrid extends HTMLElement {
  constructor() {
    super();
    this.attachShadow({ mode: 'open' });
    const tool = (name, off) => `<button aria-label="${name}" ${off ? 'disabled' : ''}><ui-icon name="${name}" ${off ? 'off' : ''}></ui-icon></button>`;
    this.shadowRoot.innerHTML = `
      <style>
        :host { display: flex; flex: 1; flex-direction: column; min-height: 0; padding: 4px 1px 4px 2px; }
        .tools { display: flex; align-items: center; height: 24px; margin: 0 0 2px 2px; flex: none; }
        .tools button { display: flex; align-items: center; justify-content: center; width: 26px; height: 24px; padding: 0; border: 0; background: none; }
        .tools .on { background: #92c0e0; }
        .tools .menu { width: 35px; gap: 3px; }
        i { width: 1px; height: 18px; margin: 0 3px; background: #c6c6c6; }
        .frame { display: flex; flex: 1; flex-direction: column; border: 1px solid #d2d2d2; padding: 1px; }
        .grid { display: flex; flex: 1; flex-direction: column; justify-content: space-between; border: 1px solid #ababab; }
        table { width: 100%; table-layout: fixed; border-collapse: collapse; }
        th { height: 18px; padding: 0 3px; border: solid #ababab; border-width: 0 1px 1px 0; text-align: left; font-weight: normal; }
        .sum { display: flex; height: 30px; border-top: 1px solid #ababab; }
        input { width: 147px; height: 25px; box-sizing: border-box; margin: 3px 0 0 20px; padding: 0 5px; border: 1px solid #ababab; text-align: right; font: inherit; color: #3b3b3b; }
      </style>
      <div class="tools">
        <button class="on" aria-label="New"><ui-icon name="page"></ui-icon></button>${tool('clone', true)}<i></i>${tool('cross')}<i></i>${tool('related', true)}<i></i>
        <button class="menu" aria-label="Views"><ui-icon name="grids"></ui-icon><svg width="6" height="4"><path d="M0 0h6l-3 3z" fill="#444"/></svg></button>
        ${tool('popout')}
      </div>
      <div class="frame"><div class="grid">
        <table>
          <colgroup><col style="width:19px"><col style="width:149px"><col></colgroup>
          <tr><th></th><th>Item Code</th><th>Desc</th></tr>
        </table>
        <div class="sum"><input value="0" aria-label="Item count" readonly></div>
      </div></div>`;
  }
}
customElements.define('item-grid', ItemGrid);

// ==============================
// <nav-panel> - left hand navigation
// ==============================

class NavPanel extends HTMLElement {
  constructor() {
    super();
    this.attachShadow({ mode: 'open' });
    const links = [
      ['clock', 'Recently Accessed Events'], ['find', 'Find Event'], ['find', 'Find Space'], ['pinadd', 'Create Event'],
      ['list', 'Event List'], ['venue', 'Venue Calendar'], ['eventcal', 'Event Calendar'],
    ];
    const areas = [
      ['house', 'My Workplace'], ['pin', 'Events'], ['bed', 'Lodging'], ['crm', 'CRM/Sales'],
      ['bubble', 'Communications'], ['task', 'Tasks'], ['ledger', 'Finance'], ['clipboard', 'Reports'],
    ];
    const link = (on) => ([icon, text]) => `<a href="#" class="${text === on ? 'on' : ''}"><ui-icon name="${icon}"></ui-icon>${text}</a>`;
    this.shadowRoot.innerHTML = `
      <style>
        :host { display: flex; flex: none; flex-direction: column; box-sizing: border-box; width: 166px; margin: 2px 0 2px 2px; border: 1px solid #ababab; }
        .top { display: flex; align-items: center; height: 34px; padding: 0 12px; font-size: 14px; gap: 10px; }
        .top span { flex: 1; }
        button { display: flex; padding: 0; border: 0; background: none; }
        h2 { margin: 0; padding: 0 7px; font-size: 14px; line-height: 33px; font-weight: normal; }
        a { display: flex; align-items: center; gap: 5px; color: inherit; text-decoration: none; white-space: nowrap; }
        .links { display: flex; flex-direction: column; flex: 1; margin: 0 2px; }
        .links a { height: 26px; padding-left: 6px; }
        .links .on { background: #f0f0f0; }
        .bar { display: flex; align-items: center; justify-content: center; height: 12px; margin: 0 1px; background: #e8e8e8; }
        .areas a { height: 36px; padding-left: 12px; gap: 6px; font-size: 14px; }
        .areas .on { color: #0072c6; }
        .foot { display: flex; align-items: center; gap: 12px; box-sizing: border-box; height: 36px; padding: 2px 0 0 28px; }
      </style>
      <div class="top"><span>Navigation</span>
        <button aria-label="Auto hide"><svg width="8" height="9"><path d="M2 0h4v5h-4zM0 5h8M4 5v4" fill="none" stroke="#777"/><path d="M4 0h2v5h-2z" fill="#777"/></svg></button>
        <button aria-label="Close"><svg width="9" height="9"><path d="M1 1l7 7M8 1l-7 7" stroke="#777" stroke-width="2"/></svg></button>
      </div>
      <h2>Events</h2>
      <div class="links">${links.map(link('Event List')).join('')}</div>
      <div class="bar"><svg width="22" height="2"><path d="M0 1h22" stroke="#777" stroke-width="2" stroke-dasharray="2 2"/></svg></div>
      <div class="areas">${areas.map(link('Events')).join('')}</div>
      <div class="foot">
        ${['transfer', 'updown', 'target', 'chart'].map(n => `<button aria-label="${n}"><ui-icon name="${n}"></ui-icon></button>`).join('')}
        <button aria-label="More"><svg width="10" height="6"><path d="M1 1l4 4l4-4" fill="none" stroke="#777" stroke-width="2"/></svg></button>
      </div>`;
  }
}
customElements.define('nav-panel', NavPanel);

// Main document area; most of it sits behind the open windows
class DocumentWell extends HTMLElement {
  constructor() {
    super();
    this.attachShadow({ mode: 'open' });
    this.shadowRoot.innerHTML = `
      <style>
        :host { display: flex; flex: 1; flex-direction: column; min-width: 0; padding: 2px 1px 2px 4px; }
        div { display: flex; flex-direction: column; box-sizing: border-box; border: 0 solid #ababab; }
        .strip { flex-direction: row; align-items: center; justify-content: space-between; height: 27px; padding-right: 6px; }
        .strip b { width: 120px; height: 27px; background: #9f9f9f; }
        .well { flex: 1; border-width: 2px 1px; padding: 20px 5px 0; }
        .summary { flex: none; height: 74px; margin: 0 5px; border: 1px solid #d2d2d2; padding: 18px 11px; gap: 3px; }
        .tone { flex: none; height: 22px; border-width: 1px; background: #0f0; align-items: flex-end; }
        .tone span { display: flex; align-items: center; width: 19px; height: 20px; border-left: 1px solid #ababab; background: #f0f0f0; }
        .tone.low { height: 20px; background: #32cd32; }
        .a { flex: 1; margin-top: 32px; border-width: 1px 1px 0; padding: 31px 6px 0; }
        .b { flex: 1; border-width: 1px 1px 1px 0; padding: 30px 1px 2px 3px; }
        .c { flex: 1; border: 1px solid #d2d2d2; padding: 29px 6px 1px 0; }
        .d { height: 162px; border-width: 1px; }
        .e { flex: 1; margin-top: 30px; border-width: 1px; padding: 29px 3px 2px 127px; }
        .f { flex: 1; border: solid #d2d2d2; border-width: 1px 1px 1px 0; }
        .g { flex: 1; border-width: 1px; }
      </style>
      <div class="strip"><b></b><svg width="9" height="5"><path d="M0 0h8l-4 4z" fill="#666"/></svg></div>
      <div class="well">
        <div class="summary">
          <div class="tone"><span><ui-icon name="pick"></ui-icon></span></div>
          <div class="tone low"></div>
        </div>
        <div class="a"><div class="b"><div class="c"><div class="d"></div><div class="e"><div class="f"><div class="g"></div></div></div></div></div></div>
      </div>`;
  }
}
customElements.define('document-well', DocumentWell);
</script>
</body>
</html>
